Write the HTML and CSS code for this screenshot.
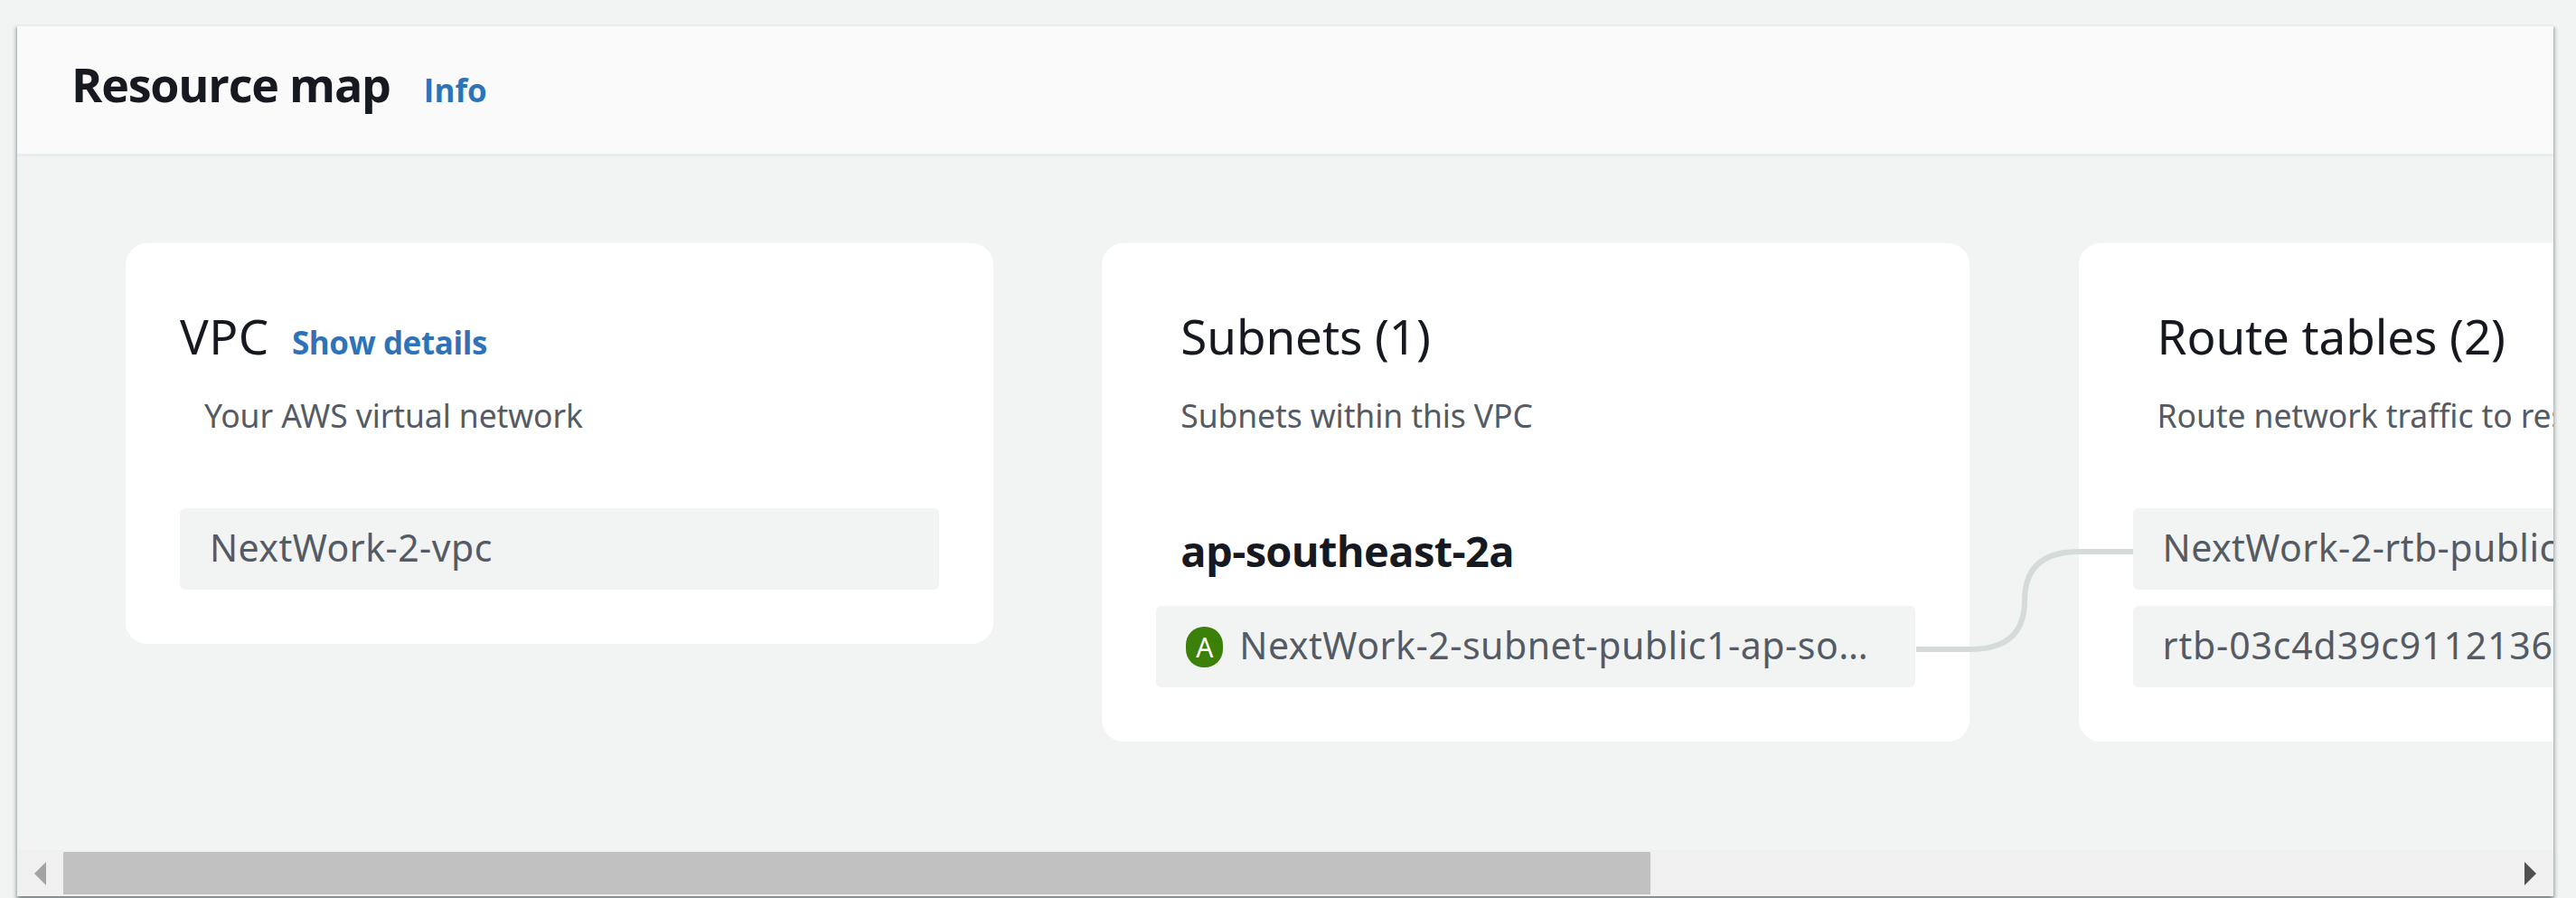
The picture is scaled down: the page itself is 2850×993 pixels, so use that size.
FILE: index.html
```html
<!DOCTYPE html>
<html lang="en">
<head>
<meta charset="utf-8">
<title>Resource map</title>
<link rel="stylesheet" href="styles.css">
</head>
<body>
<section class="panel">
  <header class="panel-header">
    <h2 class="panel-title">Resource map</h2>
    <a class="link">Info</a>
  </header>
  <div class="map">
    <article class="card">
      <div class="card-head card-head-flush">
        <h3 class="card-title">VPC</h3>
        <a class="link">Show details</a>
      </div>
      <p class="card-desc">Your AWS virtual network</p>
      <div class="nodes">
        <div class="node">NextWork-2-vpc</div>
      </div>
    </article>
    <article class="card">
      <div class="card-head">
        <h3 class="card-title">Subnets (1)</h3>
      </div>
      <p class="card-desc">Subnets within this VPC</p>
      <h4 class="zone">ap-southeast-2a</h4>
      <div class="node node-subnet"><span class="badge">A</span><span class="node-name">NextWork-2-subnet-public1-ap-so…</span></div>
    </article>
    <article class="card">
      <div class="card-head">
        <h3 class="card-title">Route tables (2)</h3>
      </div>
      <p class="card-desc">Route network traffic to resources</p>
      <div class="nodes">
        <div class="node">NextWork-2-rtb-public</div>
        <div class="node node-id">rtb-03c4d39c9112136</div>
      </div>
    </article>
    <svg class="connector" width="240" height="120" viewBox="0 0 240 120">
      <path d="M0 114H60Q120 114 120 60Q120 6 180 6H240" fill="none" stroke="#d5dbdb" stroke-width="6"/>
    </svg>
  </div>
  <div class="scrollbar">
    <svg class="arrow" width="13" height="26" viewBox="0 0 13 26"><path d="M13 0V26L0 13Z" fill="#a3a3a3"/></svg>
    <div class="track"><div class="thumb"></div></div>
    <svg class="arrow" width="13" height="26" viewBox="0 0 13 26"><path d="M0 0V26L13 13Z" fill="#505050"/></svg>
  </div>
</section>
</body>
</html>
```
FILE: styles.css
```css
* { box-sizing: border-box; }

body {
  margin: 0;
  height: 993px;
  padding: 27px 25px 2px 19px;
  overflow: hidden;
  background: #f2f4f3;
  color: #16191f;
  font-family: "Noto Sans", "Open Sans", sans-serif;
}

h2, h3, h4, p { margin: 0; }

.panel {
  display: flex;
  flex-direction: column;
  height: 964px;
  background: #f2f4f3;
  box-shadow: 0 3px 3px 0 rgba(0, 28, 36, .3), 3px 3px 3px 0 rgba(0, 28, 36, .15), -3px 3px 3px 0 rgba(0, 28, 36, .15);
}

.panel-header {
  display: flex;
  align-items: baseline;
  gap: 37px;
  height: 146px;
  padding: 34px 60px 0;
  border-top: 2px solid #eaeded;
  border-bottom: 3px solid #eaeded;
  background: #fafafa;
}

.panel-title {
  font: 700 52px/60px "Open Sans", sans-serif;
  letter-spacing: -1.2px;
}

.link {
  color: #2e73b8;
  font: 700 35px/40px "Open Sans", sans-serif;
  letter-spacing: -.4px;
}

.panel-header .link { letter-spacing: 0; }

.map {
  position: relative;
  display: flex;
  align-items: flex-start;
  gap: 120.3px;
  flex: 1;
  padding: 96px 0 0 120px;
  overflow: hidden;
}

.card {
  flex: none;
  width: 960px;
  padding: 67px 60px 60px;
  border-radius: 24px;
  background: #fff;
}

.card-head {
  display: flex;
  align-items: baseline;
  gap: 25px;
  height: 72px;
  padding-left: 27px;
}

.card-head-flush { padding-left: 0; }

.card-head-flush .card-title { letter-spacing: .5px; }

.card-title {
  font-size: 53px;
  font-weight: 400;
  line-height: 72px;
  letter-spacing: -.1px;
}

.card-desc {
  margin-top: 24px;
  padding-left: 27px;
  color: #545b64;
  font-size: 35.5px;
  line-height: 54px;
  letter-spacing: -.1px;
  white-space: nowrap;
}

.nodes {
  display: grid;
  gap: 18px;
  margin-top: 76px;
}

.node {
  height: 90px;
  padding: 0 33px;
  border-radius: 6px;
  background: #f2f3f3;
  color: #545b64;
  font-size: 41px;
  line-height: 87px;
  letter-spacing: .45px;
  white-space: nowrap;
}

.node-id { letter-spacing: .85px; }

.zone {
  margin: 93px 0 31px;
  padding-left: 27px;
  font: 700 47px/60px "Open Sans", sans-serif;
  letter-spacing: -.64px;
}

.node-subnet {
  display: flex;
  gap: 18px;
  letter-spacing: .53px;
}

.badge {
  align-self: center;
  width: 41px;
  height: 45px;
  border-radius: 20px;
  background: #3b8008;
  color: #fff;
  font-size: 30px;
  line-height: 45px;
  letter-spacing: 0;
  text-align: center;
}

.connector {
  position: absolute;
  left: 2101px;
  top: 431px;
}

.scrollbar {
  display: flex;
  align-items: center;
  gap: 19px;
  height: 51px;
  padding: 0 19px;
  background: #f0f0f0;
}

.track { flex: 1; height: 47px; }

.thumb {
  width: 1756px;
  height: 47px;
  background: #c1c1c1;
}
```
